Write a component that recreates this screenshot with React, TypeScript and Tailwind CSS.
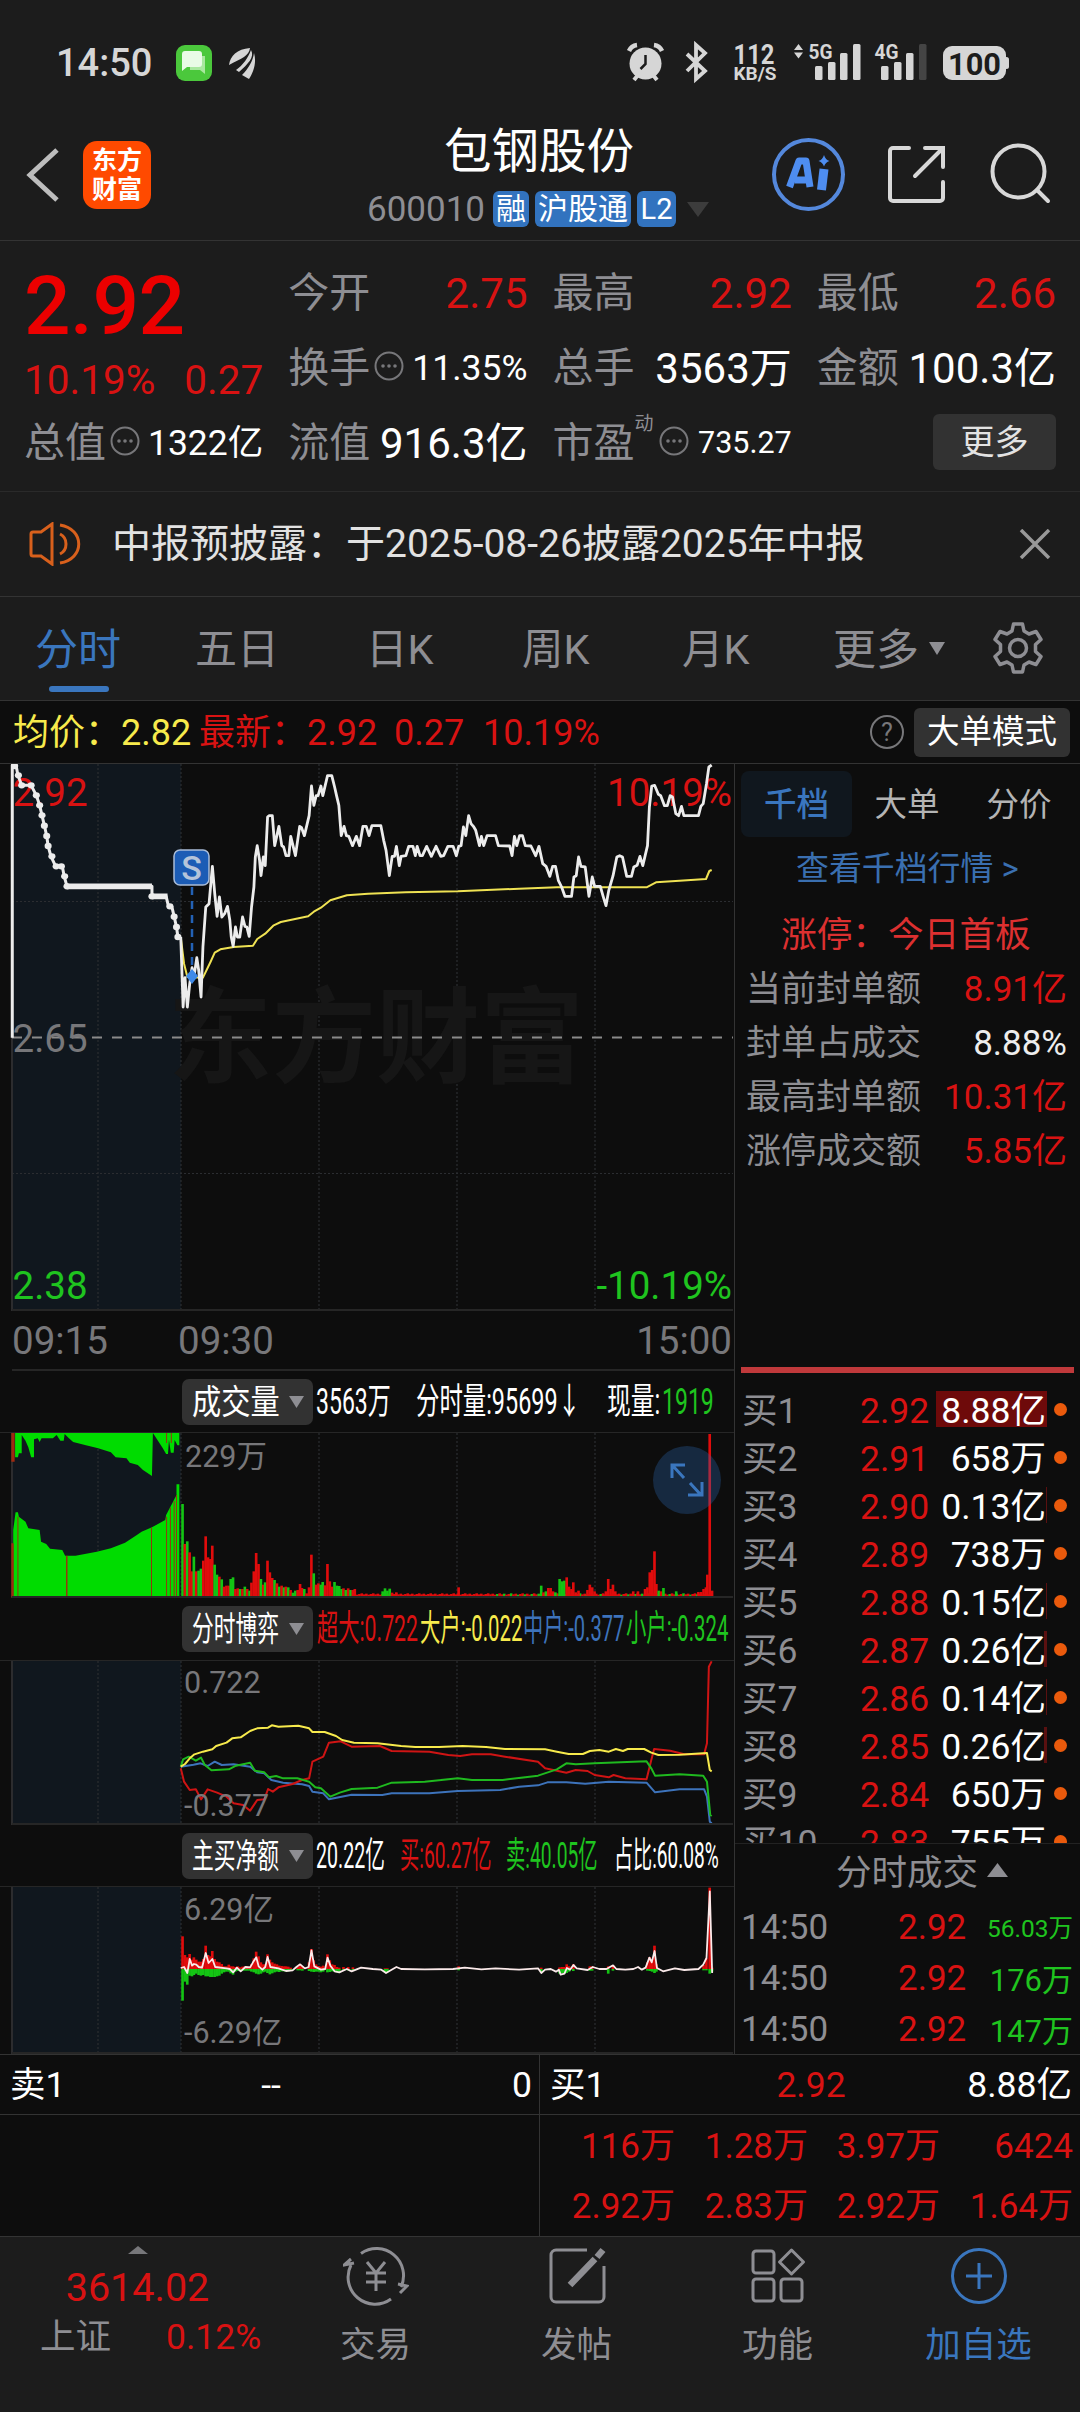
import type { ReactNode } from 'react'
import clsx from 'clsx'

const RED = '#d81212'
const GREEN = '#1fc41f'

/* ---------- chart data ---------- */

const AUCTION =
  '26,862 26,45 34,45 38,75 46,105 66,105 77,135 84,165 89,195 94,226 99,257 102,287 108,318 118,348 132,348 136,378 142,408 322,408 322,438 352,438 357,468 364,468 369,499 374,530 377,560 383,560'

const AUCTION_DOTS = [
  [31, 47], [39, 75], [46, 105], [66, 105], [77, 135], [84, 165], [89, 195], [94, 226], [99, 257], [102, 287],
  [110, 318], [119, 348], [130, 348], [137, 378], [142, 408], [322, 438], [360, 468], [369, 499], [374, 530], [377, 560],
]

const PRICE =
  '383,560 388,770 392,682 397,770 402,700 407,652 411,680 417,622 421,660 426,740 430,590 436,470 443,460 450,348 455,430 460,498 465,440 470,500 476,490 482,468 487,510 490,560 494,588 499,530 503,560 508,560 514,500 519,528 523,530 528,558 533,470 538,410 541,320 545,286 550,330 553,376 558,320 562,346 567,200 570,196 577,196 582,286 591,228 597,286 601,290 606,316 612,316 616,258 626,316 635,228 639,232 645,256 655,196 660,107 665,165 670,136 674,136 680,107 684,136 694,76 703,76 709,110 713,135 718,165 723,256 729,228 734,256 739,258 747,286 755,258 762,286 769,228 776,228 782,256 788,226 807,226 813,270 818,300 825,376 831,318 836,318 840,288 846,346 850,318 860,316 866,288 875,288 880,316 884,288 890,316 895,316 904,288 914,318 924,288 934,318 940,316 949,288 960,288 967,316 972,288 977,286 982,230 987,256 993,196 998,220 1003,228 1008,240 1016,286 1020,258 1025,286 1032,256 1050,256 1056,286 1080,287 1085,316 1090,258 1095,286 1101,256 1107,256 1113,286 1125,287 1135,316 1142,288 1150,340 1157,348 1165,378 1171,348 1177,348 1183,390 1190,410 1197,438 1211,438 1216,380 1221,376 1226,320 1231,348 1240,350 1248,438 1255,380 1260,408 1272,408 1278,438 1284,466 1290,420 1299,376 1307,320 1313,316 1319,320 1328,378 1338,378 1343,350 1350,345 1356,318 1362,346 1372,286 1376,170 1381,107 1387,105 1395,132 1400,136 1408,166 1414,166 1420,136 1425,140 1432,190 1438,196 1444,168 1449,196 1480,196 1485,168 1490,160 1497,100 1502,50 1508,44'

const AVERAGE =
  '383,560 390,640 397,680 430,682 446,635 455,607 467,597 495,590 536,586 545,566 562,550 580,525 595,515 653,498 665,484 680,472 700,450 735,435 780,430 860,426 970,423 1100,415 1180,411 1370,411 1390,396 1440,391 1496,386 1503,362 1508,359'

// [x, height], negative height = falling minute
const VOLUME: number[][] = [
  [387, -280], [392, 160], [397, -168], [402, 135], [407, 78], [411, -122], [416, 78], [421, -80], [426, -86],
  [431, 110], [436, 183], [441, 120], [446, 115], [450, 155], [455, -98], [460, -68], [465, 62], [470, -54],
  [475, 32], [480, 35], [485, 35], [489, -55], [494, -60], [499, 25], [504, 27], [509, -25], [514, 25],
  [519, -32], [524, 25], [529, -20], [533, 44], [538, 78], [543, 133], [548, 100], [553, -55], [558, 38],
  [562, -45], [567, 110], [572, 75], [577, 58], [582, -52], [587, 42], [592, -32], [597, 35], [602, -30],
  [606, 32], [611, -30], [616, 22], [621, -14], [626, -20], [631, 22], [636, 40], [640, 28], [645, -25],
  [650, 12], [655, 30], [660, 128], [665, -72], [670, 38], [675, 42], [680, -38], [684, -46], [689, 36],
  [694, 100], [699, 48], [704, 32], [709, -46], [714, -35], [719, -34], [724, -25], [728, 27], [733, -22],
  [738, 27], [743, -22], [748, 22], [752, 25], [811, -18], [816, -27], [821, -20], [826, -26], [831, 14],
  [840, 15], [972, 30], [1147, -35], [1152, 15], [1157, -18], [1162, 28], [1167, 28], [1172, 18], [1177, -15],
  [1186, -55], [1191, -48], [1196, -50], [1201, 60], [1206, 32], [1211, 25], [1215, 45], [1220, 15],
  [1226, 20], [1245, 22], [1250, 38], [1255, 30], [1260, 18], [1284, 18], [1289, 55], [1294, 25], [1299, 38],
  [1304, 18], [1342, 18], [1352, 18], [1367, 25], [1372, 30], [1377, 75], [1382, 82], [1387, 138], [1391, 40],
  [1396, -20], [1401, 18], [1406, -28], [1433, -18], [1480, 16], [1486, 16], [1491, 25], [1496, 30],
  [1499, 68], [1504, 490], [1509, 20],
]

const VOLUME_BASE = Array.from({ length: 155 }, (_, i) => [757 + i * 4.87, (i % 3 === 1 && i > 60 ? -1 : 1) * (8 + ((i * 7) % 5))])

const NET: number[][] = [
  [387, 98, 95], [392, 42, 38], [397, 35, 47], [402, 45, 20], [407, 28, 22], [411, 35, 18], [416, 28, 14],
  [421, 22, 18], [426, 22, 20], [431, 30, 18], [436, 70, 22], [441, 42, 22], [446, 38, 24], [450, 54, 24],
  [455, 30, 24], [460, 22, 22], [465, 20, 20], [470, 15, 14], [475, 8, 10], [480, 8, 8], [485, 13, 8],
  [489, 8, 13], [494, 8, 17], [499, 6, 8], [504, 8, 6], [509, 5, 6], [514, 7, 5], [519, 8, 5], [524, 8, 5],
  [529, 7, 5], [533, 15, 8], [538, 32, 10], [543, 52, 14], [548, 38, 16], [553, 20, 14], [558, 14, 10],
  [562, 14, 8], [567, 44, 12], [572, 28, 16], [577, 20, 13], [582, 16, 10], [587, 14, 8], [592, 10, 9],
  [597, 9, 7], [602, 8, 7], [606, 8, 7], [611, 7, 7], [616, 4, 4], [631, 6, 4], [636, 14, 4], [641, 8, 5],
  [655, 20, 6], [660, 60, 8], [665, 26, 9], [670, 14, 8], [675, 9, 8], [680, 7, 10], [685, 10, 8],
  [694, 44, 10], [699, 26, 9], [704, 14, 7], [709, 12, 8], [714, 6, 10], [719, 4, 9], [728, 6, 5], [738, 6, 4],
  [748, 5, 4], [816, 2, 9], [821, 2, 9], [972, 8, 4], [1147, 4, 10], [1186, 5, 14], [1191, 6, 12],
  [1196, 6, 14], [1201, 14, 12], [1206, 8, 8], [1215, 14, 6], [1250, 8, 5], [1255, 7, 5], [1289, 8, 14],
  [1299, 12, 5], [1372, 20, 5], [1377, 36, 6], [1382, 28, 8], [1387, 70, 12], [1391, 14, 8], [1491, 12, 4],
  [1497, 32, 4], [1504, 244, 14], [1509, 4, 8],
]

const NET_LINE =
  '383,415 390,412 397,430 402,388 407,408 411,403 416,405 421,412 428,414 436,370 442,400 450,388 456,412 480,416 487,418 494,428 502,414 510,425 520,412 530,413 536,398 543,383 548,410 556,420 562,412 567,382 573,412 590,416 606,424 620,422 628,412 636,404 646,416 654,412 660,362 666,410 680,420 689,418 694,384 700,408 709,425 719,428 735,418 745,425 765,414 790,418 808,420 818,430 828,422 840,412 850,418 900,419 960,418 985,414 1020,419 1050,416 1100,420 1140,416 1147,430 1155,420 1167,418 1178,426 1184,420 1188,435 1196,432 1201,415 1208,420 1215,406 1222,416 1245,421 1256,412 1270,418 1285,418 1299,407 1306,418 1325,420 1342,418 1352,412 1360,420 1368,414 1376,384 1381,398 1387,364 1392,415 1405,425 1430,416 1450,421 1480,418 1490,405 1497,385 1504,185 1509,430'

const FLOWS = [
  {
    color: '#3d73bb',
    points:
      '383,500 410,494 425,490 440,498 455,485 470,495 495,493 530,500 545,517 560,520 575,540 600,548 640,553 655,558 662,575 685,580 697,598 745,584 810,585 830,580 910,580 970,573 1060,570 1100,560 1140,556 1160,547 1200,547 1240,551 1290,545 1370,548 1388,577 1440,568 1492,568 1498,590 1504,665 1508,670',
  },
  {
    color: '#cf1414',
    points:
      '383,505 390,545 402,570 415,568 426,598 440,568 460,578 480,590 495,610 515,615 530,632 545,600 560,598 568,567 578,575 590,562 620,552 640,540 655,535 662,485 685,470 697,428 722,424 745,440 805,438 830,453 910,455 950,465 975,468 1000,463 1040,463 1070,470 1140,485 1155,505 1200,518 1220,510 1245,513 1260,525 1290,532 1300,525 1325,535 1370,538 1380,480 1386,447 1420,452 1450,463 1492,463 1498,430 1502,200 1508,184',
  },
  {
    color: '#1fb91f',
    points:
      '383,500 388,478 400,470 415,482 426,473 434,495 448,511 485,508 500,497 530,488 540,512 560,517 570,532 585,528 600,535 630,535 655,545 668,562 680,565 700,590 720,578 745,567 800,563 830,548 900,545 970,535 1000,540 1065,540 1140,527 1180,508 1200,490 1220,493 1260,490 1370,484 1380,505 1388,527 1440,523 1490,527 1498,545 1505,645 1508,648',
  },
  {
    color: '#f7ea4c',
    points:
      '383,500 392,492 402,475 412,463 430,455 450,448 458,438 480,428 492,415 510,412 530,393 545,385 568,383 576,376 590,380 632,377 655,385 662,396 688,396 712,408 725,420 750,428 800,430 850,438 880,441 930,441 980,438 1030,441 1070,447 1155,448 1180,455 1205,462 1235,462 1250,453 1270,450 1290,455 1305,447 1320,453 1330,447 1365,447 1380,458 1395,465 1440,464 1498,459 1504,510 1508,514',
  },
]

const bids = [
  { name: '买1', price: '2.92', vol: '8.88亿', bar: 'w-[111px] bg-[#6e0a0a]' },
  { name: '买2', price: '2.91', vol: '658万', bar: '' },
  { name: '买3', price: '2.90', vol: '0.13亿', bar: 'w-px bg-[#5a1010]' },
  { name: '买4', price: '2.89', vol: '738万', bar: '' },
  { name: '买5', price: '2.88', vol: '0.15亿', bar: 'w-px bg-[#5a1010]' },
  { name: '买6', price: '2.87', vol: '0.26亿', bar: 'w-[3px] bg-[#5a1010]' },
  { name: '买7', price: '2.86', vol: '0.14亿', bar: 'w-px bg-[#5a1010]' },
  { name: '买8', price: '2.85', vol: '0.26亿', bar: 'w-[3px] bg-[#5a1010]' },
  { name: '买9', price: '2.84', vol: '650万', bar: '' },
  { name: '买10', price: '2.83', vol: '755万', bar: '' },
]

const trades = [
  { time: '14:50', price: '2.92', vol: '56.03万', size: 'text-[24.5px]' },
  { time: '14:50', price: '2.92', vol: '176万', size: 'text-[31px]' },
  { time: '14:50', price: '2.92', vol: '147万', size: 'text-[31px]' },
]

const limits = [
  { label: '当前封单额', value: '8.91亿', color: 'text-[#d81212]' },
  { label: '封单占成交', value: '8.88%', color: 'text-[#ededed]' },
  { label: '最高封单额', value: '10.31亿', color: 'text-[#d81212]' },
  { label: '涨停成交额', value: '5.85亿', color: 'text-[#d81212]' },
]

/* ---------- small pieces ---------- */

function StatusBar() {
  return (
    <div className="h-[125px] flex items-center justify-between pl-[56px] pr-[70px] text-[#d6d6d6]">
      <div className="flex items-center">
        <span className="w-[120px] text-[38px] font-medium">14:50</span>
        <svg width="84" height="40" viewBox="0 0 84 40">
          <rect x="0" y="2" width="36" height="36" rx="9" fill="#4bc83c" />
          <path d="M14 13h15v18l-5-4h-10z" fill="#a9e89f" />
          <path d="M9 8h14a3 3 0 0 1 3 3v10a3 3 0 0 1-3 3h-12l-5 4v-17a3 3 0 0 1 3-3z" fill="#e9fbe6" />
          <g fill="#d6d6d6">
            <path d="M53 22c1-9 8-16 21-17-1 8-8 10-21 17z" />
            <path d="M60 27c7-5 12-12 15-20 4 7-3 14-12 22z" />
            <path d="M66 32c6-6 11-14 12-22 3 10-1 20-5 26z" />
          </g>
        </svg>
      </div>
      <svg width="384" height="44" viewBox="626 41 384 44" fill="#d6d6d6">
        <circle cx="645.500" cy="63.500" r="16" />
        <path d="M629 51a10 10 0 0 1 8-6M662 51a10 10 0 0 0-8-6" fill="none" stroke="#d6d6d6" strokeWidth="4.500" />
        <path d="M634 80l4-5M657 80l-4-5" stroke="#d6d6d6" strokeWidth="4" />
        <path d="M645.500 55v9l-5 5" fill="none" stroke="#1c1c1c" strokeWidth="2.500" />
        <path d="M687 54l18 17-9 8v-34l9 8-18 18" fill="none" stroke="#d6d6d6" strokeWidth="3.800" />
        <text x="754" y="63.500" fontSize="27" fontWeight="700" textAnchor="middle" textLength="41" lengthAdjust="spacingAndGlyphs">112</text>
        <text x="755" y="80" fontSize="18" fontWeight="700" textAnchor="middle" textLength="43" lengthAdjust="spacingAndGlyphs">KB/S</text>
        <path d="M794 50l4.500-6 4.500 6zM794 52.500l4.500 6 4.500-6z" />
        <text x="808.500" y="59" fontSize="20.500" fontWeight="700" textLength="24" lengthAdjust="spacingAndGlyphs">5G</text>
        <rect x="815" y="66" width="7.500" height="14" rx="1.500" />
        <rect x="828" y="62" width="7.500" height="18" rx="1.500" />
        <rect x="840" y="53" width="7.500" height="27" rx="1.500" />
        <rect x="853" y="44" width="7.500" height="36" rx="1.500" />
        <text x="874.500" y="59" fontSize="20.500" fontWeight="700" textLength="24" lengthAdjust="spacingAndGlyphs">4G</text>
        <rect x="881" y="66" width="7.500" height="14" rx="1.500" />
        <rect x="894" y="62" width="7.500" height="18" rx="1.500" />
        <rect x="906" y="53" width="7.500" height="27" rx="1.500" />
        <rect x="919" y="44" width="7.500" height="36" rx="1.500" fill="#444" />
        <rect x="943" y="46" width="63" height="34" rx="9" />
        <rect x="1004" y="57" width="5" height="12" rx="2.500" />
        <text x="974.500" y="74.500" fontSize="31" fontWeight="700" textAnchor="middle" textLength="53" lengthAdjust="spacingAndGlyphs" fill="#1c1c1c">100</text>
      </svg>
    </div>
  )
}

function Header() {
  return (
    <header className="h-[116px] flex items-start border-b border-[#333] pl-[26px] pr-[28px] pt-[3px]">
      <svg className="mt-[19px]" width="34" height="56" viewBox="0 0 34 56" fill="none" stroke="#bdbdbd" strokeWidth="5">
        <path d="M31 3L4 28l27 25" />
      </svg>
      <div className="ml-[23px] mt-[13px] w-[68px] h-[68px] rounded-[14px] bg-[#ff4a00] text-white text-[25px] font-bold leading-[29px] flex flex-col items-center justify-center">
        <span>东方</span>
        <span>财富</span>
      </div>
      <div className="flex-1 pl-[216px] flex flex-col">
        <h1 className="mt-px pl-[77px] text-[47.5px] leading-[47px] text-white">包钢股份</h1>
        <div className="mt-[15px] h-[36px] flex items-center text-white">
          <span className="w-[126px] text-[35px] text-[#8e8e93]">600010</span>
          <span className="w-[36px] h-[36px] rounded-[6px] bg-[#3273bf] text-[30px] flex items-center justify-center">融</span>
          <span className="ml-[6px] w-[96px] h-[36px] rounded-[6px] bg-[#3273bf] text-[30px] flex items-center justify-center">沪股通</span>
          <span className="ml-[6px] w-[39px] h-[36px] rounded-[6px] bg-[#3273bf] text-[29px] flex items-center justify-center">L2</span>
          <svg className="ml-[11px]" width="22" height="15" viewBox="0 0 22 15">
            <path d="M0 0h22L11 15z" fill="#3c3c3c" />
          </svg>
        </div>
      </div>
      <svg className="mt-[8px]" width="282" height="76" viewBox="770 136 282 76" fill="none" stroke="#d8d8d8" strokeWidth="4" strokeLinecap="round">
        <circle cx="808.500" cy="174.500" r="34.500" stroke="#5488dc" />
        <path d="M789.500 187l9.500-26h7l4 26M795 180h13" stroke="#4e8df0" strokeWidth="7" strokeLinecap="butt" strokeLinejoin="round" />
        <path d="M824 169l-2.500 21" stroke="#4e8df0" strokeWidth="9" strokeLinecap="butt" />
        <path d="M824 155q1.500 5 5.500 6-4 1-5.500 5.500-1.500-4.500-5.500-5.500 4-1 5.500-6z" fill="#4e8df0" stroke="none" />
        <path d="M909 148h-16a3 3 0 0 0-3 3v47a3 3 0 0 0 3 3h47a3 3 0 0 0 3-3v-16M925 148h18v19M942 149l-27 27" />
        <circle cx="1018.500" cy="171.500" r="26" />
        <path d="M1037 190l11 11" />
      </svg>
    </header>
  )
}

function Dots() {
  return (
    <svg className="ml-[4px] shrink-0 -translate-y-[3px]" width="30" height="30" viewBox="0 0 30 30" fill="#77777a">
      <circle cx="15" cy="15" r="13.500" fill="none" stroke="#77777a" strokeWidth="2" />
      <circle cx="9" cy="15" r="1.800" />
      <circle cx="15" cy="15" r="1.800" />
      <circle cx="21" cy="15" r="1.800" />
    </svg>
  )
}

function Stat({ label, value, dots, sup, className }: { label: string; value: string; dots?: boolean; sup?: string; className: string }) {
  return (
    <div className="h-[75px] flex items-center">
      <span className="text-[41px] text-[#8e8e93]">{label}</span>
      {sup && <span className="w-[20px] text-[19px] text-[#8e8e93] -translate-y-[20px]">{sup}</span>}
      {dots && <Dots />}
      <span className={clsx('ml-auto', className)}>{value}</span>
    </div>
  )
}

function Quote() {
  return (
    <section className="h-[251px] border-b border-[#2a2a2a] pt-[15px] pl-[24px] pr-[24px] grid grid-cols-4 gap-x-[25px]">
      <div>
        <div className="h-[99px] flex items-center text-[82px] font-medium text-[#ec0000] tracking-[-0.5px]">2.92</div>
        <div className="h-[51px] flex items-center justify-between text-[40.5px] text-[#d81212]">
          <span>10.19%</span>
          <span>0.27</span>
        </div>
        <Stat label="总值" value="1322亿" dots className="text-[35.5px] text-white" />
      </div>
      <div>
        <Stat label="今开" value="2.75" className="text-[42px] text-[#d81212]" />
        <Stat label="换手" value="11.35%" dots className="text-[35.5px] text-white" />
        <Stat label="流值" value="916.3亿" className="text-[42px] text-white" />
      </div>
      <div>
        <Stat label="最高" value="2.92" className="text-[42px] text-[#d81212]" />
        <Stat label="总手" value="3563万" className="text-[42px] text-white" />
        <Stat label="市盈" sup="动" value="735.27" dots className="text-[30.5px] text-white" />
      </div>
      <div>
        <Stat label="最低" value="2.66" className="text-[42px] text-[#d81212]" />
        <Stat label="金额" value="100.3亿" className="text-[42px] text-white" />
        <div className="h-[71px] flex items-center justify-end">
          <button className="w-[123px] h-[56px] rounded-[6px] bg-[#323232] text-[34px] text-[#e3e3e3]">更多</button>
        </div>
      </div>
    </section>
  )
}

function Notice() {
  return (
    <div className="h-[105px] border-b border-[#333] flex items-center pl-[29px] pr-[29px]">
      <svg width="52" height="44" viewBox="0 0 52 44" fill="none" stroke="#d8601c" strokeWidth="3">
        <path d="M2 12v20q0 2 2 2h8l11 8V2L12 10H4q-2 0-2 2z" />
        <path d="M31 12c8 4 8 16 0 20M31 3c25 4 25 34 0 38" />
      </svg>
      <span className="ml-[31px] pt-px text-[39px] text-[#e2e2e2]">中报预披露：于2025-08-26披露2025年中报</span>
      <svg className="ml-auto" width="32" height="30" viewBox="0 0 32 30" stroke="#999" strokeWidth="3.500">
        <path d="M2 1l28 28M30 1L2 29" />
      </svg>
    </div>
  )
}

function Tabs() {
  return (
    <nav className="h-[104px] border-b border-[#333] flex items-center pl-[35px] pt-[3px] text-[41.5px] text-[#8e8e93]">
      <div className="relative w-[160px] text-[43px] text-[#3a76be]">
        分时
        <i className="absolute left-[14px] top-[57px] w-[60px] h-[6px] rounded-full bg-[#3a76be]" />
      </div>
      <span className="w-[171px] text-[42px]">五日</span>
      <span className="w-[156px]">日K</span>
      <span className="w-[160px]">周K</span>
      <span className="w-[151px]">月K</span>
      <span className="text-[43px]">更多</span>
      <svg className="ml-[10px] -translate-y-[2px]" width="16" height="13" viewBox="0 0 16 13">
        <path d="M0 0h16L8 13z" fill="#8e8e93" />
      </svg>
      <svg className="ml-[46px] -translate-y-[2px]" width="54" height="54" viewBox="0 0 54 54" fill="none" stroke="#8e8e93" strokeWidth="3.500" strokeLinejoin="round">
        <path d="M22.500 3h9l1.500 7 5 3 7-2.500 5 8-5.500 5v7l5.500 5-5 8-7-2.500-5 3-1.500 7h-9l-1.500-7-5-3-7 2.500-5-8 5.500-5v-7l-5.500-5 5-8 7 2.500 5-3z" />
        <circle cx="27" cy="27" r="8.500" />
      </svg>
    </nav>
  )
}

function Summary() {
  return (
    <div className="h-[63px] border-b border-[#333] flex items-center pl-[13px] pr-[10px] text-[36px] text-[#d81212] whitespace-nowrap">
      <span className="w-[186px] pt-px text-[#f7ea4c]">均价：2.82</span>
      <span className="w-[108px] pt-px">最新：</span>
      <span className="w-[87px] pt-px">2.92</span>
      <span className="w-[89px] pt-px">0.27</span>
      <span className="pt-px">10.19%</span>
      <span className="ml-auto w-[34px] h-[34px] rounded-full border-2 border-[#77777a] text-[#77777a] text-[25px] flex items-center justify-center">?</span>
      <span className="ml-[10px] w-[156px] h-[49px] rounded-[6px] bg-[#323232] text-[32.5px] text-white flex items-center justify-center">大单模式</span>
    </div>
  )
}

/* ---------- charts ---------- */

function Grid({ height, children }: { height: number; children: ReactNode }) {
  return (
    <svg className="block" width="734" height={height} viewBox={`0 0 734 ${height}`}>
      <rect x="12" y="0" width="169" height={height - 1} fill="#10171e" />
      {[98, 181, 319, 457, 595].map((x) => (
        <path key={x} d={`M${x} 0V${height}`} stroke="#2b2d31" strokeWidth="1.200" strokeDasharray="2 2" />
      ))}
      <path d={`M12 0V${height}`} stroke="#2c2c2e" strokeWidth="2" />
      {children}
      <path d={`M12 ${height - 1}H733`} stroke="#262626" strokeWidth="2" />
    </svg>
  )
}

// data is kept on a 1568-wide grid, three units per vertical pixel
function Plot({ top, children }: { top: number; children: ReactNode }) {
  return <g transform={`scale(0.47194 0.33333) translate(0 ${-top})`}>{children}</g>
}

function Line({ points, color, width = 2 }: { points: string; color: string; width?: number }) {
  return (
    <polyline points={points} fill="none" stroke={color} strokeWidth={width} strokeLinejoin="round" vectorEffect="non-scaling-stroke" />
  )
}

function PriceChart() {
  return (
    <>
      <Grid height={547}>
        <path d="M12 137.500H733M12 409.500H733" stroke="#2b2d31" strokeWidth="1.200" strokeDasharray="2 2" />
        <text x="168" y="311" fontSize="104" fontWeight="700" fill="#161616">东方财富</text>
        <path d="M12 273.500H733" stroke="#8a8a8a" strokeWidth="1.800" strokeDasharray="10 10" />
        <g fontSize="38.500">
          <text x="12.500" y="42" fill={RED}>2.92</text>
          <text x="732" y="42" fill={RED} textAnchor="end">10.19%</text>
          <text x="12.500" y="288" fill="#77777a">2.65</text>
          <text x="12.500" y="535" fill={GREEN}>2.38</text>
          <text x="732" y="535" fill={GREEN} textAnchor="end">-10.19%</text>
        </g>
        <Plot top={41}>
          <Line points={AVERAGE} color="#efe253" />
          <Line points={AUCTION} color="#ececec" width={3} />
          <Line points={PRICE} color="#ececec" width={2.8} />
          <path d="M142 408H322M322 438H355" stroke="#ececec" strokeWidth="17" />
          {AUCTION_DOTS.map(([x, y]) => (
            <ellipse key={y + '-' + x} cx={x} cy={y} rx="7.500" ry="9.500" fill="#ececec" />
          ))}
        </Plot>
        <path d="M192 123V202" stroke="#2361b5" strokeWidth="2.500" strokeDasharray="8 6" />
        <path d="M192 205l6 7-6 8-6-8z" fill="#3f8ae8" />
        <rect x="174" y="86" width="35" height="35" rx="6" fill="#1c5cb5" stroke="#a9bcd8" strokeWidth="1.500" />
        <text x="191.500" y="115.500" fontSize="34" fontWeight="500" fill="#b5c4da" textAnchor="middle">S</text>
      </Grid>
      <div className="h-[60px] pt-[2px] border-b-2 border-[#262626] ml-[12px] flex items-center text-[38.5px] text-[#77777a]">
        <span className="w-[166px]">09:15</span>
        <span>09:30</span>
        <span className="ml-auto pr-[2px]">15:00</span>
      </div>
    </>
  )
}

// indicator header text is horizontally condensed to fit its slot
function Tight({ slot, scale, color, children }: { slot: string; scale: string; color?: string; children: ReactNode }) {
  return (
    <span className={clsx('shrink-0 whitespace-nowrap text-[36px]', slot, color)}>
      <span className={clsx('inline-block origin-left', scale)}>{children}</span>
    </span>
  )
}

function IndicatorBar({ name, scale, className, children }: { name: string; scale: string; className: string; children: ReactNode }) {
  return (
    <div className={clsx('flex items-center pl-[182px] text-white border-b border-[#262626]', className)}>
      <div className="w-[131px] h-[46px] mr-[3px] shrink-0 rounded-[7px] bg-[#323232] flex items-center pl-[10px] pr-[9px]">
        <span className={clsx('w-[97px] shrink-0 whitespace-nowrap text-[34px] origin-left', scale)}>{name}</span>
        <svg className="shrink-0" width="15" height="12" viewBox="0 0 15 12">
          <path d="M0 0h15L7.500 12z" fill="#8e8e93" />
        </svg>
      </div>
      {children}
    </div>
  )
}

function VolumeChart() {
  return (
    <Grid height={165}>
      <text x="185" y="34" fontSize="30.500" fill="#77777a">229万</text>
      <Plot top={189}>
        <path
          fill="#00dc00"
          d="M32 189V262H38L40 250H46V195L54 212 60 232 66 262H72V208L80 205 84 216 88 205H112L120 195 128 212H135L137 192 146 205 155 216 180 225 208 235 235 247 245 262 268 265 275 278 292 285 303 300 322 318 324 189 345 235 352 252H356L358 210 362 248H368L370 210 376 226H380V189z"
        />
        <path
          fill="#00dc00"
          d="M28 682V480L33 427H38L40 440 54 455 60 475 84 480 87 515 98 522 106 536 132 540 138 557H160L205 545 235 535 265 518 290 495 300 485 322 472 350 450 352 435 365 400 374 375V343H380V682z"
        />
        <path fill="#a02a10" d="M24 189h7v86h-7zM24 520h5v162h-5zM37 440h2v242h-2zM140 557h3v125h-3zM320 473h2v209h-2zM352 440h2v242h-2zM360 412h2v270h-2zM368 393h2v289h-2zM373 375h2v307h-2zM352 189h2v30h-2zM362 189h2v30h-2z" />
        {[...VOLUME_BASE, ...VOLUME].map(([x, h], i) => (
          <rect key={i} x={x - 3} y={682 - Math.abs(h)} width="5.600" height={Math.abs(h)} fill={h > 0 ? '#e00c0c' : '#14c414'} />
        ))}
      </Plot>
      <circle cx="687" cy="47" r="34" fill="#2b66ad" fillOpacity="0.32" />
      <path d="M672 45V32h13M673 33l11 12M690 50l11 12M702 49v13h-14" fill="none" stroke="#3a76be" strokeWidth="3" />
    </Grid>
  )
}

function FlowChart() {
  return (
    <Grid height={164}>
      <Plot top={183}>
        {FLOWS.map((f) => (
          <Line key={f.color} points={f.points} color={f.color} />
        ))}
      </Plot>
      <g fontSize="30.500" fill="#77777a">
        <text x="184" y="32">0.722</text>
        <text x="184" y="155">-0.377</text>
      </g>
    </Grid>
  )
}

function NetChart() {
  return (
    <Grid height={167}>
      <g fontSize="30.500" fill="#77777a">
        <text x="184" y="33">6.29亿</text>
        <text x="184" y="156">-6.29亿</text>
      </g>
      <Plot top={172}>
        {NET.map(([x, up, down]) => (
          <g key={x}>
            <rect x={x - 3} y={418 - up} width="5.600" height={up} fill="#e00c0c" />
            <rect x={x - 3} y="418" width="5.600" height={down} fill="#14c414" />
          </g>
        ))}
        <Line points={NET_LINE} color="#fbeaea" width={1.8} />
      </Plot>
    </Grid>
  )
}

function Charts() {
  return (
    <div className="w-[735px] shrink-0 border-r border-[#333]">
      <PriceChart />
      <IndicatorBar name="成交量" scale="scale-x-[0.86]" className="h-[62px] pt-px">
        <Tight slot="w-[100px]" scale="scale-x-[0.64]">3563万</Tight>
        <Tight slot="w-[191px]" scale="scale-x-[0.65]">分时量:95699↓</Tight>
        <Tight slot="w-[55px]" scale="scale-x-[0.66]">现量:</Tight>
        <Tight slot="w-[60px]" scale="scale-x-[0.64]" color="text-[#1fc41f]">1919</Tight>
      </IndicatorBar>
      <VolumeChart />
      <IndicatorBar name="分时博弈" scale="scale-x-[0.64]" className="h-[63px]">
        <Tight slot="w-[104px] pl-px" scale="scale-x-[0.59]" color="text-[#d81212]">超大:0.722</Tight>
        <Tight slot="w-[103px]" scale="scale-x-[0.565]" color="text-[#f7ea4c]">大户:-0.022</Tight>
        <Tight slot="w-[103px]" scale="scale-x-[0.56]" color="text-[#3d73bb]">中户:-0.377</Tight>
        <Tight slot="w-[102px]" scale="scale-x-[0.565]" color="text-[#1fc41f]">小户:-0.324</Tight>
      </IndicatorBar>
      <FlowChart />
      <IndicatorBar name="主买净额" scale="scale-x-[0.64]" className="h-[62px]">
        <Tight slot="w-[84px]" scale="scale-x-[0.545]">20.22亿</Tight>
        <Tight slot="w-[106px]" scale="scale-x-[0.535]" color="text-[#d81212]">买:60.27亿</Tight>
        <Tight slot="w-[108px]" scale="scale-x-[0.535]" color="text-[#1fc41f]">卖:40.05亿</Tight>
        <Tight slot="w-[104px]" scale="scale-x-[0.53]">占比:60.08%</Tight>
      </IndicatorBar>
      <NetChart />
    </div>
  )
}

/* ---------- order book ---------- */

function OrderBook() {
  return (
    <aside className="w-[345px] h-[1290px]">
      <div className="pt-[7px] h-[73px] pl-[6px] pr-[4px] flex text-[32.5px] text-[#b4b4b4]">
        <span className="w-[111px] pt-[2px] rounded-[8px] bg-[#10171e] font-medium text-[#3a76be] flex items-center justify-center">千档</span>
        <span className="w-[110px] pt-[2px] flex items-center justify-center">大单</span>
        <span className="flex-1 pt-[2px] flex items-center justify-center">分价</span>
      </div>
      <div className="h-[63px] pt-[2px] pl-[61px] flex items-center text-[32.9px] text-[#3a6fb0]">查看千档行情 &gt;</div>
      <div className="h-[62px] pl-[46px] pt-[9px] flex items-center text-[35.7px] text-[#dc3030]">涨停：今日首板</div>
      {limits.map((l) => (
        <div key={l.label} className="h-[54px] pt-px pl-[11px] pr-[13px] flex items-center justify-between text-[35px]">
          <span className="text-[#8e8e93]">{l.label}</span>
          <span className={l.color}>{l.value}</span>
        </div>
      ))}
      <div className="mt-[189px] ml-[6px] w-[333px] h-[6px] bg-[#c0393b]" />
      <div className="h-[471px] pt-[15px] overflow-hidden border-b border-[#222]">
        {bids.map((b) => (
          <div key={b.name} className="relative h-[48px] flex items-center pl-[7px] pr-[13px] text-[35.5px]">
            <i className={clsx('absolute right-[33px] top-[3px] h-[36px]', b.bar)} />
            <span className="w-[118px] text-[#8e8e93]">{b.name}</span>
            <span className="text-[#d81212]">{b.price}</span>
            <span className="relative ml-auto text-white">{b.vol}</span>
            <i className="ml-[8px] w-[13px] h-[13px] -translate-y-[3px] rounded-full bg-[#ea5a0c]" />
          </div>
        ))}
      </div>
      <div className="h-[58px] pt-[2px] pl-[101px] flex items-center text-[35.5px] text-[#8e8e93]">
        分时成交
        <svg className="ml-[9px] -translate-y-[4px]" width="21" height="14" viewBox="0 0 21 14">
          <path d="M0 14h21L10.500 0z" fill="#8e8e93" />
        </svg>
      </div>
      {trades.map((t) => (
        <div key={t.vol} className="h-[51px] pl-[6px] pr-[7px] flex items-center text-[35px]">
          <span className="w-[157px] text-[#8e8e93]">{t.time}</span>
          <span className="text-[#d81212]">{t.price}</span>
          <span className={clsx('ml-auto pt-[3px] text-[#1fc41f]', t.size)}>{t.vol}</span>
        </div>
      ))}
    </aside>
  )
}

function Level1() {
  return (
    <div className="border-t border-[#333] h-[182px] grid grid-cols-2 text-[35.5px] text-white">
      <div className="border-r border-[#333]">
        <div className="h-[60px] pt-[3px] border-b border-[#333] grid grid-cols-3 items-center pl-[10px] pr-[7px]">
          <span>卖1</span>
          <span className="text-center">--</span>
          <span className="text-right">0</span>
        </div>
      </div>
      <div>
        <div className="h-[60px] pt-[3px] border-b border-[#333] grid grid-cols-3 items-center pl-[10px] pr-[8px]">
          <span>买1</span>
          <span className="text-center text-[#d81212]">2.92</span>
          <span className="text-right">8.88亿</span>
        </div>
        <div className="pt-[2px] pr-[6px] grid grid-cols-[135px_133px_132px_133px] text-right text-[35px] leading-[60px] text-[#d81212]">
          <span>116万</span>
          <span>1.28万</span>
          <span>3.97万</span>
          <span>6424</span>
          <span>2.92万</span>
          <span>2.83万</span>
          <span>2.92万</span>
          <span>1.64万</span>
        </div>
      </div>
    </div>
  )
}

function NavItem({ label, active, children }: { label: string; active?: boolean; children: ReactNode }) {
  return (
    <div className={clsx('w-[201px] pt-[9px] flex flex-col items-center', active ? 'text-[#3a76be]' : 'text-[#8e8e93]')}>
      <svg width="66" height="60" viewBox="0 0 66 60" fill="none" stroke="currentColor" strokeWidth="3">
        {children}
      </svg>
      <span className="mt-[22px] text-[35.5px]">{label}</span>
    </div>
  )
}

function BottomNav() {
  return (
    <footer className="h-[176px] border-t border-[#333] bg-[#1c1c1c] flex">
      <div className="w-[275px] pt-[9px] flex flex-col items-center text-[#d81212]">
        <svg width="20" height="8" viewBox="0 0 20 8">
          <path d="M0 8h20L10 0z" fill="#77777a" />
        </svg>
        <span className="mt-[14px] text-[39.5px]">3614.02</span>
        <div className="w-full mt-[12px] pl-[40px] flex text-[35.5px]">
          <span className="w-[126px] text-[#8e8e93]">上证</span>
          <span>0.12%</span>
        </div>
      </div>
      <NavItem label="交易">
        <path d="M18 7.500A27 27 0 0 1 58 41M48 53A27 27 0 0 1 8 19" />
        <path d="M11 17L1 19l7-6M55 38l9 2-7 7" />
        <path d="M24 16l9 11 9-11M33 27v18M23 27h20M23 36h20" />
      </NavItem>
      <NavItem label="发帖">
        <path d="M43 4H12a5 5 0 0 0-5 5v42a5 5 0 0 0 5 5h43a5 5 0 0 0 5-5V20" />
        <path d="M53 11l6-7M51 13L26 39" strokeWidth="6.500" />
      </NavItem>
      <NavItem label="功能">
        <rect x="8" y="5" width="21" height="22" rx="3" />
        <rect x="8" y="33" width="21" height="22" rx="3" />
        <rect x="36" y="33" width="21" height="22" rx="3" />
        <path d="M46.500 4l12 12-12 12-12-12z" strokeLinejoin="round" />
      </NavItem>
      <NavItem label="加自选" active>
        <circle cx="33" cy="30" r="26.500" />
        <path d="M33 17v26M20 30h26" />
      </NavItem>
    </footer>
  )
}

export default function App() {
  return (
    <div className="w-[1080px] h-[2412px] overflow-hidden bg-[#0d0d0d] font-['Roboto','Noto_Sans_CJK_SC',sans-serif] leading-none">
      <div className="bg-[#1c1c1c]">
        <StatusBar />
        <Header />
        <Quote />
        <Notice />
        <Tabs />
      </div>
      <Summary />
      <div className="flex h-[1290px]">
        <Charts />
        <OrderBook />
      </div>
      <Level1 />
      <BottomNav />
    </div>
  )
}
